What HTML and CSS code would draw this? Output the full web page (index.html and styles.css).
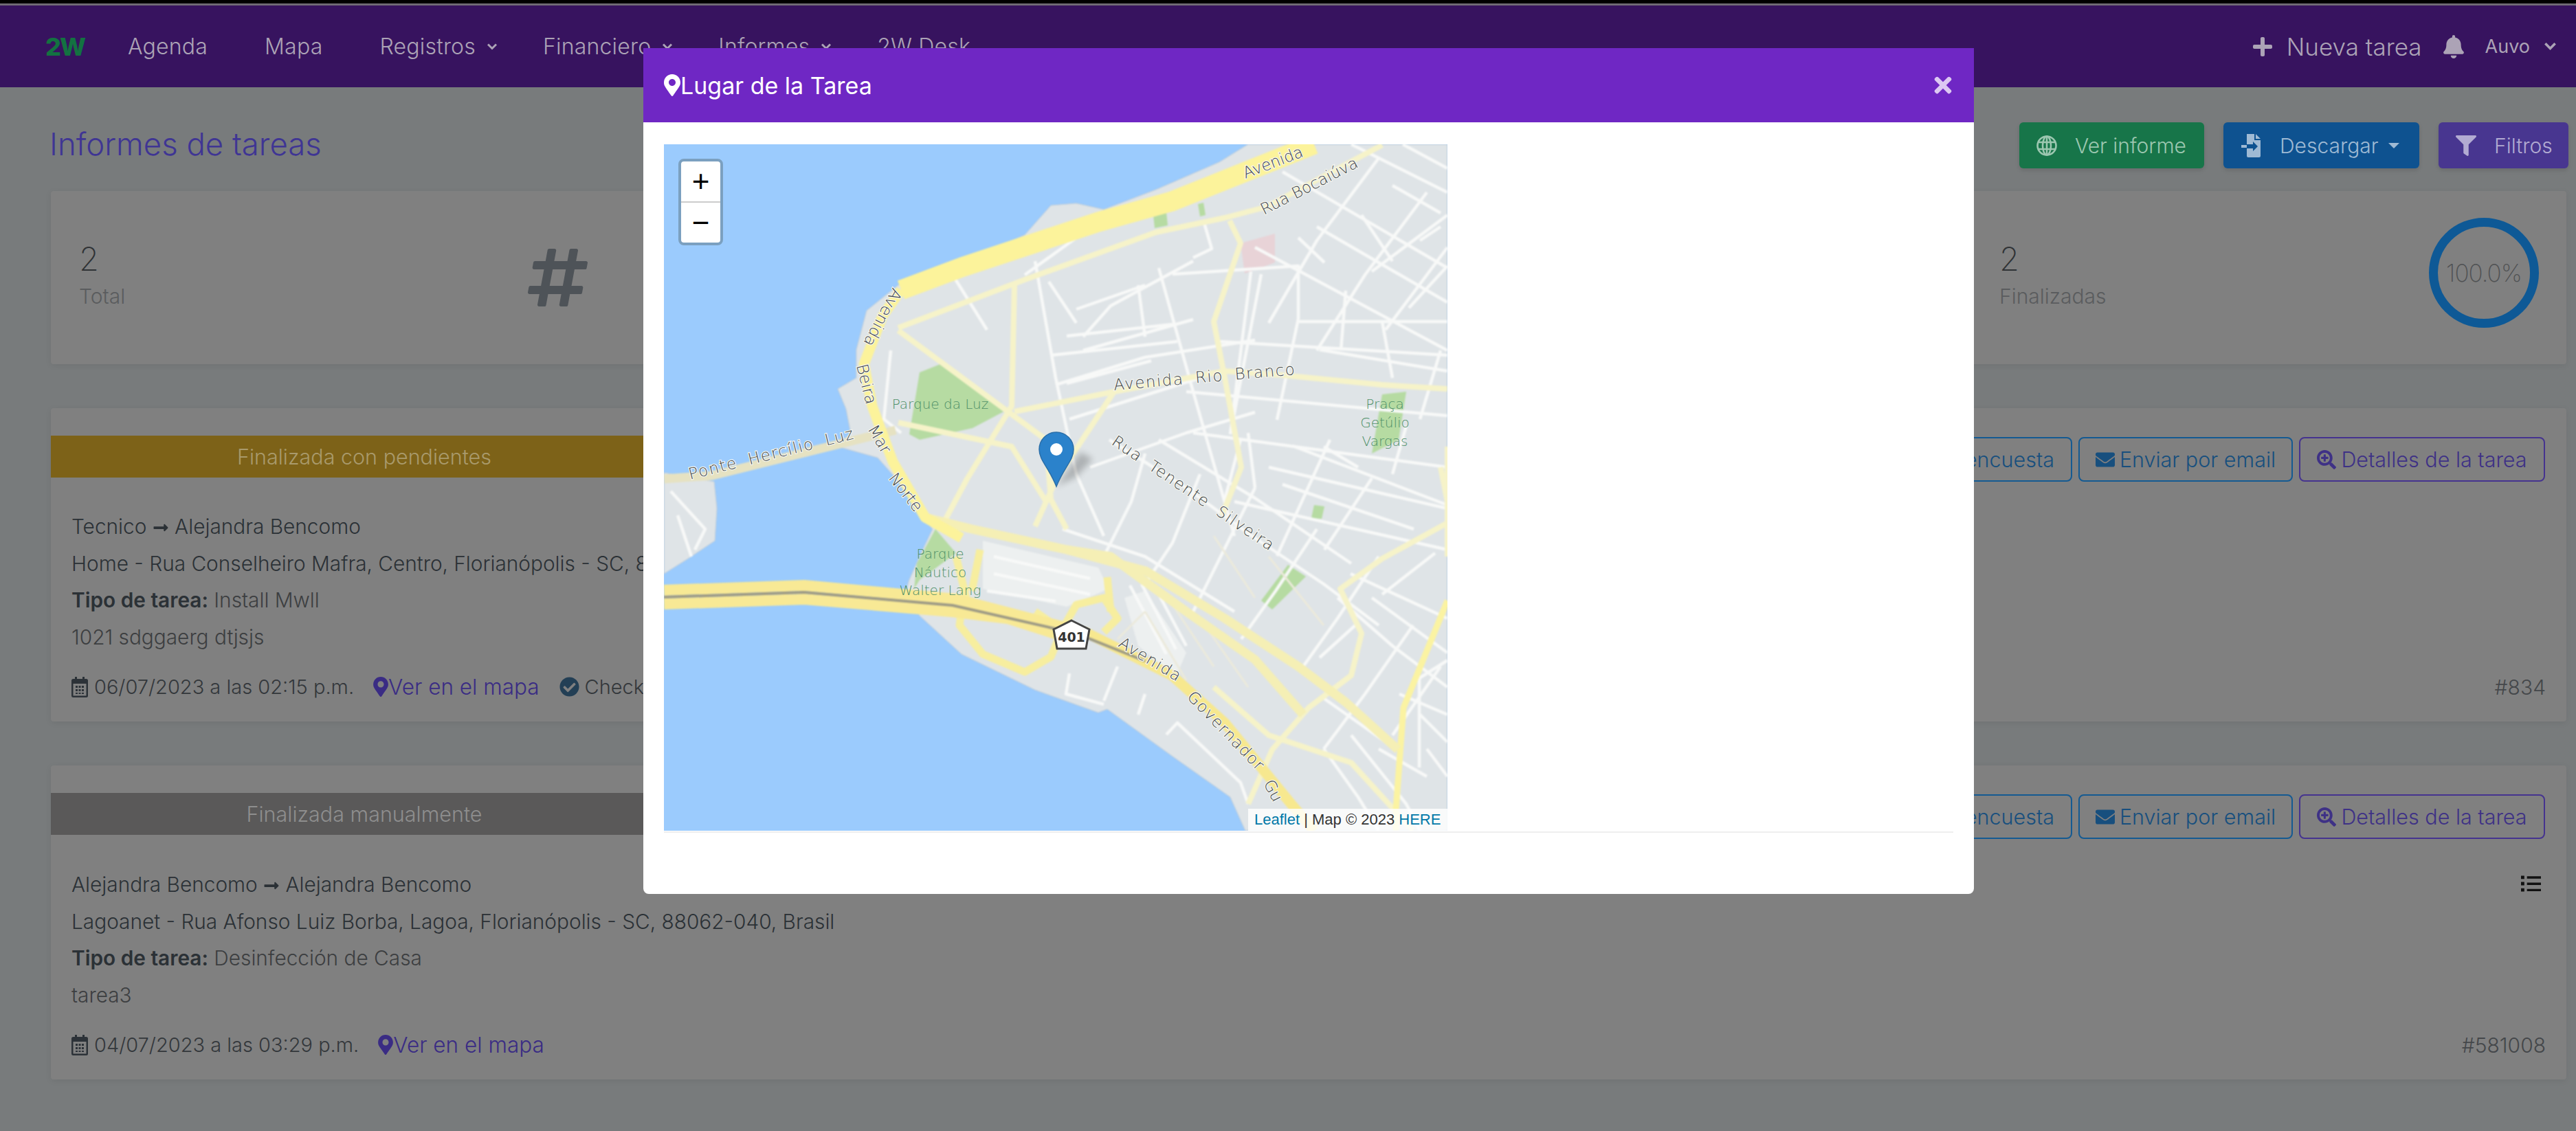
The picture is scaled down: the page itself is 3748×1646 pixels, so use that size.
FILE: index.html
```html
<!DOCTYPE html>
<html lang="es">
<head>
<meta charset="utf-8">
<title>Informes de tareas</title>
<link rel="stylesheet" href="styles.css">
</head>
<body>
<svg class="defs" width="0" height="0" aria-hidden="true">
  <symbol id="i-pin" viewBox="0 0 384 512"><path d="M172.268 501.67C26.97 291.031 0 268.413 0 192 0 85.961 85.961 0 192 0s192 85.961 192 192c0 76.413-26.97 99.031-172.268 309.67-9.535 13.774-29.93 13.773-39.464 0zM192 272c44.183 0 80-35.817 80-80s-35.817-80-80-80-80 35.817-80 80 35.817 80 80 80z"/></symbol>
  <symbol id="i-check" viewBox="0 0 512 512"><path d="M504 256c0 136.967-111.033 248-248 248S8 392.967 8 256 119.033 8 256 8s248 111.033 248 248zM227.314 387.314l184-184c6.248-6.248 6.248-16.379 0-22.627l-22.627-22.627c-6.248-6.249-16.379-6.249-22.628 0L216 308.118l-70.059-70.059c-6.248-6.248-16.379-6.248-22.628 0l-22.627 22.627c-6.248 6.248-6.248 16.379 0 22.627l104 104c6.249 6.249 16.379 6.249 22.628.001z"/></symbol>
  <symbol id="i-mail" viewBox="0 0 512 512"><path d="M502.3 190.8c3.9-3.1 9.7-.2 9.7 4.7V400c0 26.5-21.5 48-48 48H48c-26.5 0-48-21.5-48-48V195.6c0-5 5.7-7.8 9.7-4.7 22.4 17.4 52.1 39.5 154.1 113.6 21.1 15.4 56.7 47.8 92.2 47.6 35.7.3 72-32.8 92.3-47.6 102-74.1 131.6-96.3 154-113.7zM256 320c23.2.4 56.6-29.2 73.4-41.4 132.7-96.3 142.8-104.7 173.4-128.7 5.8-4.5 9.2-11.5 9.2-18.9v-19c0-26.5-21.5-48-48-48H48C21.5 64 0 85.5 0 112v19c0 7.4 3.4 14.3 9.2 18.9 30.6 23.9 40.7 32.4 173.4 128.7 16.8 12.2 50.2 41.8 73.4 41.4z"/></symbol>
  <symbol id="i-zoom" viewBox="0 0 512 512"><path d="M304 192v32c0 6.6-5.4 12-12 12h-56v56c0 6.6-5.4 12-12 12h-32c-6.6 0-12-5.4-12-12v-56h-56c-6.6 0-12-5.4-12-12v-32c0-6.6 5.4-12 12-12h56v-56c0-6.6 5.4-12 12-12h32c6.6 0 12 5.4 12 12v56h56c6.6 0 12 5.4 12 12zm201 284.7L476.7 505c-9.4 9.4-24.6 9.4-33.9 0L343 405.3c-4.5-4.5-7-10.6-7-17V372c-35.3 27.6-79.7 44-128 44C93.1 416 0 322.9 0 208S93.1 0 208 0s208 93.1 208 208c0 48.3-16.4 92.7-44 128h16.3c6.4 0 12.5 2.5 17 7l99.7 99.7c9.3 9.4 9.3 24.6 0 34zM344 208c0-75.2-60.8-136-136-136S72 132.8 72 208s60.8 136 136 136 136-60.8 136-136z"/></symbol>
  <symbol id="i-plus" viewBox="0 0 448 512"><path d="M416 208H272V64c0-17.67-14.33-32-32-32h-32c-17.67 0-32 14.33-32 32v144H32c-17.67 0-32 14.33-32 32v32c0 17.67 14.33 32 32 32h144v144c0 17.67 14.33 32 32 32h32c17.67 0 32-14.33 32-32V304h144c17.67 0 32-14.33 32-32v-32c0-17.67-14.33-32-32-32z"/></symbol>
  <symbol id="i-bell" viewBox="0 0 448 512"><path d="M224 512c35.32 0 63.97-28.65 63.97-64H160.03c0 35.35 28.65 64 63.97 64zm215.39-149.71c-19.32-20.76-55.47-51.99-55.47-154.29 0-77.7-54.48-139.9-127.94-155.16V32c0-17.67-14.32-32-31.98-32s-31.98 14.33-31.98 32v20.84C118.56 68.1 64.08 130.3 64.08 208c0 102.3-36.15 133.53-55.47 154.29-6 6.45-8.66 14.16-8.61 21.71.11 16.4 12.98 32 32.1 32h383.8c19.12 0 32-15.6 32.1-32 .05-7.55-2.61-15.27-8.61-21.71z"/></symbol>
  <symbol id="i-filter" viewBox="0 0 512 512"><path d="M487.976 0H24.028C2.71 0-8.047 25.866 7.058 40.971L192 225.941V432c0 7.831 3.821 15.17 10.237 19.662l80 55.98C298.02 518.69 320 507.493 320 487.98V225.941l184.947-184.97C520.021 25.896 509.338 0 487.976 0z"/></symbol>
  <symbol id="i-arrow" viewBox="0 0 448 512"><path d="M313.941 216H12c-6.627 0-12 5.373-12 12v56c0 6.627 5.373 12 12 12h301.941v46.059c0 21.382 25.851 32.09 40.971 16.971l86.059-86.059c9.373-9.373 9.373-24.569 0-33.941l-86.059-86.059c-15.119-15.119-40.971-4.411-40.971 16.971V216z"/></symbol>
  <symbol id="i-times" viewBox="0 0 352 512"><path d="M242.72 256l100.07-100.07c12.28-12.28 12.28-32.19 0-44.48l-22.24-22.24c-12.28-12.28-32.19-12.28-44.48 0L176 189.28 75.93 89.21c-12.28-12.28-32.19-12.28-44.48 0L9.21 111.45c-12.28 12.28-12.28 32.19 0 44.48L109.28 256 9.21 356.07c-12.28 12.28-12.28 32.19 0 44.48l22.24 22.24c12.28 12.28 32.2 12.28 44.48 0L176 322.72l100.07 100.07c12.28 12.28 32.2 12.28 44.48 0l22.24-22.24c12.28-12.28 12.28-32.19 0-44.48L242.72 256z"/></symbol>
  <symbol id="i-hash" viewBox="0 0 448 512" preserveAspectRatio="none"><path d="M440.667 182.109l7.143-40c1.313-7.355-4.342-14.109-11.813-14.109h-74.81l14.623-81.891C377.123 38.754 371.468 32 363.997 32h-40.632a12 12 0 0 0-11.813 9.891L296.175 128H197.54l14.623-81.891C213.477 38.754 207.822 32 200.35 32h-40.632a12 12 0 0 0-11.813 9.891L132.528 128H53.432a12 12 0 0 0-11.813 9.891l-7.143 40C33.163 185.246 38.818 192 46.289 192h74.81L98.242 320H19.146a12 12 0 0 0-11.813 9.891l-7.143 40C-1.123 377.246 4.532 384 12.003 384h74.81L72.19 465.891C70.877 473.246 76.532 480 84.003 480h40.632a12 12 0 0 0 11.813-9.891L151.826 384h98.634l-14.623 81.891C234.523 473.246 240.178 480 247.65 480h40.632a12 12 0 0 0 11.813-9.891L315.472 384h79.096a12 12 0 0 0 11.813-9.891l7.143-40c1.313-7.355-4.342-14.109-11.813-14.109h-74.81l22.857-128h79.096a12 12 0 0 0 11.813-9.891zM261.889 320h-98.634l22.857-128h98.634l-22.857 128z"/></symbol>
  <symbol id="i-cal" viewBox="0 0 24 30"><path fill-rule="evenodd" d="M5 0h3v3h8V0h3v3h2.500A2.500 2.500 0 0 1 24 5.500v22a2.500 2.500 0 0 1-2.500 2.500h-19A2.500 2.500 0 0 1 0 27.500v-22A2.500 2.500 0 0 1 2.500 3H5zM2.500 10v17.500h19V10zM6 13h3v3H6zm4.500 0h3v3h-3zm4.500 0h3v3h-3zM6 18h3v3H6zm4.500 0h3v3h-3zm4.500 0h3v3h-3zM6 23h3v2H6zm4.500 0h3v2h-3zm4.500 0h3v2h-3z"/></symbol>
  <symbol id="i-chev" viewBox="0 0 16 10"><path d="M2 1.500l6 6 6-6" fill="none" stroke="currentColor" stroke-width="3"/></symbol>
  <symbol id="i-globe" viewBox="0 0 30 30"><g fill="none" stroke="currentColor" stroke-width="2.600"><circle cx="15" cy="15" r="13.500"/><ellipse cx="15" cy="15" rx="6" ry="13.500"/><path d="M2 10h26M2 20h26M15 1v28"/></g></symbol>
  <symbol id="i-file" viewBox="0 0 30 34"><path d="M8 0h11v9h9v23a2 2 0 0 1-2 2H10a2 2 0 0 1-2-2V21h9v4l7-7-7-7v4H8z"/><path d="M21 0l7 7h-7zM0 16h8v4H0z"/></symbol>
  <symbol id="i-list" viewBox="0 0 30 24"><path d="M0 0h5v5H0zM0 9.500h5v5H0zM0 19h5v5H0zM9 1h21v3.500H9zM9 10.500h21V14H9zM9 20h21v3.500H9z"/></symbol>
</svg>

<div class="strip"></div>
<header class="nav">
  <span class="logo">2W</span>
  <nav class="nav-left">
    <a class="nav-link nav-plain">Agenda</a>
    <a class="nav-link nav-plain">Mapa</a>
    <a class="nav-link">Registros <svg class="chev"><use href="#i-chev"/></svg></a>
    <a class="nav-link">Financiero <svg class="chev"><use href="#i-chev"/></svg></a>
    <a class="nav-link">Informes <svg class="chev"><use href="#i-chev"/></svg></a>
    <a class="nav-link">2W Desk</a>
  </nav>
  <div class="nav-right">
    <svg class="nav-plus"><use href="#i-plus"/></svg>
    <span class="nav-new">Nueva tarea</span>
    <svg class="nav-bell"><use href="#i-bell"/></svg>
    <span class="nav-user">Auvo</span>
    <svg class="chev user-chev"><use href="#i-chev"/></svg>
  </div>
</header>

<main class="page">
  <div class="page-head">
    <h1 class="title">Informes de tareas</h1>
    <div class="head-actions">
      <a class="solid solid-green"><svg class="solid-icon"><use href="#i-globe"/></svg>Ver informe</a>
      <a class="solid solid-blue"><svg class="solid-icon"><use href="#i-file"/></svg>Descargar<i class="caret"></i></a>
      <a class="solid solid-purple"><svg class="solid-icon"><use href="#i-filter"/></svg>Filtros</a>
    </div>
  </div>

  <section class="card summary">
    <div class="stat-left">
      <div class="stat"><div class="stat-num">2</div><div class="stat-label">Total</div></div>
      <svg class="hash"><use href="#i-hash"/></svg>
    </div>
    <div class="stat-right">
      <div class="stat"><div class="stat-num">2</div><div class="stat-label">Finalizadas</div></div>
      <div class="ring">100.0%</div>
    </div>
  </section>

  <article class="card task">
    <div class="task-top">
      <div class="band band-yellow">Finalizada con pendientes</div>
      <div class="task-actions">
        <a class="outline outline-blue outline-survey">Ver encuesta</a>
        <a class="outline outline-blue"><svg class="out-icon"><use href="#i-mail"/></svg>Enviar por email</a>
        <a class="outline outline-purple"><svg class="out-icon"><use href="#i-zoom"/></svg>Detalles de la tarea</a>
      </div>
    </div>
    <div class="task-body">
      <p class="row">Tecnico <svg class="arrow"><use href="#i-arrow"/></svg> Alejandra Bencomo</p>
      <p class="row">Home - Rua Conselheiro Mafra, Centro, Florianópolis - SC, 88010-060, Brasil</p>
      <p class="row"><b class="strong">Tipo de tarea:</b> <span class="row-thin">Install Mwll</span></p>
      <p class="row row-light">1021 sdggaerg dtjsjs</p>
    </div>
    <div class="task-foot">
      <svg class="foot-cal"><use href="#i-cal"/></svg><span class="foot-date">06/07/2023 a las 02:15 p.m.</span>
      <a class="foot-map"><svg class="foot-pin"><use href="#i-pin"/></svg>Ver en el mapa</a>
      <svg class="foot-check"><use href="#i-check"/></svg><span class="foot-date">Check-in realizado</span>
      <span class="task-id">#834</span>
    </div>
  </article>

  <article class="card task task-second">
    <div class="task-top">
      <div class="band band-gray">Finalizada manualmente</div>
      <div class="task-actions">
        <a class="outline outline-blue outline-survey">Ver encuesta</a>
        <a class="outline outline-blue"><svg class="out-icon"><use href="#i-mail"/></svg>Enviar por email</a>
        <a class="outline outline-purple"><svg class="out-icon"><use href="#i-zoom"/></svg>Detalles de la tarea</a>
      </div>
    </div>
    <svg class="task-list"><use href="#i-list"/></svg>
    <div class="task-body">
      <p class="row">Alejandra Bencomo <svg class="arrow"><use href="#i-arrow"/></svg> Alejandra Bencomo</p>
      <p class="row">Lagoanet - Rua Afonso Luiz Borba, Lagoa, Florianópolis - SC, 88062-040, Brasil</p>
      <p class="row"><b class="strong">Tipo de tarea:</b> <span class="row-thin">Desinfección de Casa</span></p>
      <p class="row row-light">tarea3</p>
    </div>
    <div class="task-foot">
      <svg class="foot-cal"><use href="#i-cal"/></svg><span class="foot-date">04/07/2023 a las 03:29 p.m.</span>
      <a class="foot-map"><svg class="foot-pin"><use href="#i-pin"/></svg>Ver en el mapa</a>
      <span class="task-id">#581008</span>
    </div>
  </article>
</main>

<div class="overlay">
  <div class="modal">
    <div class="modal-head">
      <svg class="modal-pin"><use href="#i-pin"/></svg>
      <span class="modal-title">Lugar de la Tarea</span>
      <svg class="modal-close"><use href="#i-times"/></svg>
    </div>
    <div class="modal-body">
      <div class="map">
        <svg class="map-art" viewBox="0 0 1140 999" preserveAspectRatio="none">
          <rect width="1140" height="999" fill="#9bcbfd"/>
          <g class="art">
            <path class="land" d="M850 0L808 26 716 66 640 95 600 86 563 89 525 132 433 173 341 205 295 242 280 299 280 340 253 356 265 385 272 421 250 439 311 456 357 508 380 547 391 560 372 600 357 634 352 650 372 686 433 742 540 794 632 827 645 822 739 890 824 950 846 999H1140V0Z"/>
            <path class="land" d="M0 478L73 491 77 530 74 577 35 603 0 625Z"/>
            <path class="park" d="M357 422L372 332 402 320 502 385 449 413 372 430Z"/>
            <path class="park" d="M1045 364L1080 360 1069 430 1030 450Z"/>
            <path class="park" d="M908 612L934 629 885 677 869 664Z"/>
            <path class="park" d="M946 525L961 527 957 545 942 544Z"/>
            <path class="park" d="M395 560L425 595 372 634 364 647 368 610Z"/>
            <path class="park" d="M712 103L731 99 733 118 714 122ZM777 87L785 85 788 103 780 105Z"/>
            <path class="pink" d="M839 144L889 130 889 172 845 188Z"/>
            <path class="lot" d="M464 577L632 616 647 647 586 673 464 647Z"/>
            <path class="lot" d="M670 660L700 650 760 740 745 775 690 730Z"/>

            <g class="streets">
              <path d="M1000 0L1140 70M1075 0L1140 35M900 40L1140 180M950 120L1140 230M860 150L1140 300"/>
              <path d="M1040 20L950 140 880 260M1110 70L1020 190 950 300M1140 150L1050 270M1140 103L1030 185M1140 177L1084 238"/>
              <path d="M923 136L961 172M785 111L797 152 770 165M1015 103L1060 170"/>
              <path d="M740 189L923 177 923 254M854 185L824 422M869 189L824 422M923 254L892 401M992 213L985 300M1045 258L1060 340"/>
              <path d="M923 258L1140 258M808 287L1140 307M954 299L1140 330M586 279L740 262M563 307L747 287M586 348L709 315"/>
              <path d="M540 170L570 340 600 480 640 570M690 205L700 280M720 180L770 360 790 430 830 570"/>
              <path d="M610 300L770 255M570 350L700 310 860 285M590 400L780 340M620 470L760 420 860 390"/>
              <path d="M760 360L1140 395M770 420L1140 470M880 470L1140 530M830 520L1140 590"/>
              <path d="M648 430L760 500 854 569 960 640 1040 700M720 430L860 515 1000 610M580 560L700 600 830 680"/>
              <path d="M839 430L816 517M900 495L1091 560M969 430L892 599M1030 486L961 590M915 439L1140 525M999 625L1140 690M1122 595L1045 655M1007 699L954 747"/>
              <path d="M700 450L680 520 640 600M780 480L740 580 700 640M860 500L810 600 770 680M950 560L890 650 840 720M1040 600L980 690 930 760"/>
              <path d="M980 660L1060 730 1140 790M1030 660L1140 740M1090 700L1020 800 960 880M1130 760L1060 860"/>
              <path d="M961 807L1060 877M1140 751L1099 777 1099 907M1000 860L1080 960 1100 999M1100 830L1140 870M960 880L1010 950 1040 999"/>
              <path d="M1070 800L1140 830M1110 880L1140 920M1040 880L1110 920"/>
              <path d="M590 770L585 800 640 815M731 859L747 842 839 929 850 960M660 760L640 810M700 800L690 830"/>
              <path d="M10 505L60 560 45 590M20 540L40 600"/>
              <path d="M420 190L470 270M330 300L320 400 345 420M650 100L525 190M700 205L600 240M560 200L600 260"/>
              <path d="M850 420L860 500M960 440L1010 470M770 170L650 235 610 280"/>
              <path d="M678 642L731 742M695 640L745 735M712 640L760 730M480 600L620 632M480 625L620 655M470 650L570 665"/>
              <path d="M1100 140L1130 120M1060 60L1130 100M1130 300L1100 400M1080 410L1060 480"/>
            </g>
            <g class="minor">
              <path d="M800 570L860 660M880 600L960 700M700 680L760 780M740 670L800 760M780 690L850 790M700 680L660 720"/>
            </g>
            <g class="road">
              <path d="M1045 1L877 91 816 107 716 128 525 197 341 267"/>
              <path d="M1140 356L1045 350 900 336 816 330 655 360 510 389"/>
              <path d="M823 111L839 144 800 258 816 340 840 470 812 540"/>
              <path d="M510 205L506 381 441 487 410 545"/>
              <path d="M341 271L556 430 563 517 586 560"/>
              <path d="M655 360L571 487 540 556"/>
              <path d="M341 405L506 440 556 520"/>
              <path d="M1140 551L1045 603 984 647 1015 712 1000 773 938 820 885 881 850 960"/>
              <path d="M1140 440V600M1130 470L1140 520"/>
              <path d="M800 790L880 860 1000 900 1090 999"/>
            </g>
            <path class="road-bright" d="M1140 664L1076 820 1065 968V999"/>
            <path class="highway-thin" d="M380 543L448 560 586 590 701 621 816 690 923 760 992 812 1068 881"/>
            <path class="highway-thin" d="M586 590L650 600 760 680 860 750 930 830"/>
            <path class="road-loop" d="M433 677L430 700 464 742 525 768 563 746 579 707 540 680M579 707L600 670 640 660 660 690 640 710"/>
            <path class="road-loop" d="M425 600L445 680M460 590L448 650M645 630L650 680"/>
            <path class="road-bridge" d="M0 487L70 482 337 416"/>
            <path class="beira-top" d="M946 0L739 83 632 113 433 179 345 212"/>
            <path class="beira" d="M345 212L318 250 291 320 303 381 333 462 380 543 433 573"/>
            <path class="gov" d="M617 712L739 773 816 842 915 963 946 999"/>
            <path class="carriage" d="M0 649L204 642 425 662 617 712"/>
            <path class="carriage" d="M0 669L204 662 418 680 500 690 610 725"/>
            <path class="carriage-line" d="M0 659L204 652 420 671 600 712 700 752"/>
          </g>
          <g class="map-labels">
            <text transform="translate(846 50) rotate(-21)">Avenida</text>
            <text transform="translate(873 103) rotate(-27)">Rua Bocaiúva</text>
            <text transform="translate(333 208) rotate(118)">Avenida</text>
            <text transform="translate(655 358) rotate(-5)" class="wide wordy">Avenida Rio Branco</text>
            <text transform="translate(38 488) rotate(-14)" class="wide wordy">Ponte Hercílio Luz</text>
            <text transform="translate(280 322) rotate(76)">Beira</text>
            <text transform="translate(296 414) rotate(60)">Mar</text>
            <text transform="translate(326 486) rotate(52)">Norte</text>
            <text transform="translate(650 436) rotate(34)" class="wide wordy">Rua Tenente Silveira</text>
            <text transform="translate(660 730) rotate(31)" class="wide">Avenida</text>
            <text transform="translate(760 805) rotate(46)" class="wide">Governador</text>
            <text transform="translate(872 930) rotate(62)">Gu</text>
          </g>
          <g class="map-parks">
            <text x="402" y="385">Parque da Luz</text>
            <text x="1049" y="385">Praça</text>
            <text x="1049" y="412">Getúlio</text>
            <text x="1049" y="439">Vargas</text>
            <text x="402" y="603">Parque</text>
            <text x="402" y="630">Náutico</text>
            <text x="402" y="656">Walter Lang</text>
          </g>
          <g>
            <path d="M593 693L619 706 614 734 572 734 567 706Z" fill="#fff" stroke="#444" stroke-width="3"/>
            <text class="shield" x="593" y="724">401</text>
          </g>
          <path class="pin-shadow" d="M571 498L606 448 624 458 600 484Z"/>
          <path d="M571 498C560 470 546 460 546 444A25 25 0 0 1 596 444C596 460 582 470 571 498Z" fill="#2b82cb" stroke="#2a6ea8" stroke-width="1.500"/>
          <ellipse cx="571" cy="444" rx="9" ry="9" fill="#fff"/>
        </svg>
        <div class="zoom">
          <span class="zoom-btn">+</span>
          <span class="zoom-btn">−</span>
        </div>
        <div class="attrib"><span class="attrib-link">Leaflet</span> | Map © 2023 <span class="attrib-link">HERE</span></div>
      </div>
      <hr class="rule">
    </div>
  </div>
</div>
</body>
</html>
```
FILE: styles.css
```css
* { box-sizing: border-box; }
html, body { margin: 0; padding: 0; }
body {
  width: 3748px;
  height: 1646px;
  overflow: hidden;
  position: relative;
  background: #787b7c;
  font-family: Inter, "Open Sans", sans-serif;
  font-weight: 300;
  color: #2c3238;
}
.defs { position: absolute; }
svg { fill: currentColor; }

.strip { height: 8px; background: linear-gradient(#000 0 5px, #6f6a74 5px); }

.nav {
  height: 119px;
  background: #37135f;
  display: flex;
  align-items: center;
  padding: 0 28px 0 66px;
  color: #aca3b6;
  font-size: 32px;
}
.logo { font-weight: 800; font-size: 36px; color: #137241; width: 120px; letter-spacing: -2px; }
.nav-left { display: flex; align-items: center; gap: 66px; }
.nav-link { display: flex; align-items: center; gap: 16px; font-weight: 300; letter-spacing: .2px; }
.nav-plain { margin-right: 17px; }
.chev { width: 16px; height: 12px; }
.nav-right { margin-left: auto; display: flex; align-items: center; }
.nav-plus { width: 28px; height: 32px; margin-right: 21px; }
.nav-new { font-size: 35px; font-weight: 300; }
.nav-bell { width: 30px; height: 34px; margin: 0 31px 0 31px; }
.nav-user { font-size: 27px; font-weight: 400; }
.user-chev { margin-left: 20px; width: 19px; height: 13px; }

.page { padding: 51px 14px 0 74px; }
.page-head { display: flex; justify-content: space-between; align-items: center; height: 67px; }
.title { margin: -3px 0 0 -2px; font-size: 45.500px; font-weight: 300; color: #3f3594; line-height: 1; }
.head-actions { display: flex; gap: 28px; margin-right: -3px; }
.solid {
  height: 67px;
  border-radius: 6px;
  display: flex;
  align-items: center;
  font-size: 30px;
  font-weight: 300;
  box-shadow: 0 3px 6px rgba(0,0,0,.12);
}
.solid-green { width: 269px; padding-left: 25px; background: #177549; color: #9cc7b0; }
.solid-blue { width: 285px; padding-left: 26px; background: #0e5290; color: #9fbad4; }
.solid-purple { width: 189px; padding-left: 25px; background: #483690; color: #b2abd2; }
.solid-icon { width: 30px; height: 34px; margin-right: 26px; flex: none; }
.caret { border: 8px solid transparent; border-top-color: currentColor; border-bottom: 0; margin-left: 14px; }

.card { background: #808080; border-radius: 4px; box-shadow: 0 2px 10px rgba(0,0,0,.07); }
.summary {
  margin-top: 33px;
  height: 252px;
  display: flex;
  justify-content: space-between;
  align-items: center;
  padding: 0 40px 0 41px;
}
.stat-left { display: flex; justify-content: space-between; align-items: center; width: 740px; }
.stat-right { display: flex; justify-content: space-between; align-items: center; width: 785px; }
.stat { margin-top: -10px; }
.stat-num { font-size: 47px; font-weight: 200; color: #2f3235; line-height: 56px; }
.stat-label { font-size: 30px; font-weight: 300; color: #5a5c5e; margin-top: 8px; line-height: 36px; }
.hash { width: 87px; height: 96px; color: #4e5358; }
.ring {
  width: 160px;
  height: 160px;
  border: 13px solid #0e5996;
  border-radius: 50%;
  display: flex;
  align-items: center;
  justify-content: center;
  font-size: 35px;
  font-weight: 200;
  color: #505254;
  letter-spacing: -1px;
  margin-top: -14px;
}

.task { margin-top: 64px; height: 456px; padding-top: 40px; position: relative; }
.task-second { margin-top: 64px; height: 457px; }
.task-top { display: flex; justify-content: space-between; align-items: flex-start; }
.band {
  width: 912px;
  height: 61px;
  display: flex;
  align-items: center;
  justify-content: center;
  font-size: 30.500px;
  font-weight: 300;
}
.band-yellow { background: #7d6218; color: #a99a6c; }
.band-gray { background: #5a5959; color: #8e8e8e; }
.task-actions { display: flex; gap: 9px; padding: 2px 31px 0 0; }
.outline {
  height: 65px;
  border: 2px solid;
  border-radius: 8px;
  display: flex;
  align-items: center;
  font-size: 30.500px;
  font-weight: 300;
  justify-content: center;
  white-space: nowrap;
}
.outline-blue { border-color: #145a92; color: #174f7e; width: 312px; }
.outline-purple { border-color: #45338f; color: #3e3186; width: 358px; }
.out-icon { width: 28px; height: 28px; margin-right: 7px; flex: none; }
.outline-survey { width: 500px; justify-content: flex-end; padding-right: 24px; }

.task-list { position: absolute; right: 37px; top: 160px; width: 29px; height: 24px; color: #111; }
.task-body { padding: 39px 30px 0; }
.task-second .task-body { padding-top: 40px; }
.row { margin: 0; font-size: 29.800px; line-height: 53.500px; font-weight: 300; color: #2b3136; white-space: nowrap; }
.row-light { font-weight: 300; color: #3c3e40; }
.row-thin { color: #3c3e40; }
.strong { font-weight: 600; }
.arrow { width: 24px; height: 24px; vertical-align: -3px; }
.task-foot { display: flex; align-items: center; padding: 26px 30px 0; font-size: 29px; white-space: nowrap; }
.foot-cal { width: 24px; height: 30px; margin-right: 9px; flex: none; color: #2c3238; }
.foot-date { font-weight: 300; color: #33373b; }
.foot-map { margin-left: 28px; display: flex; align-items: center; color: #3a2c84; font-size: 31.500px; font-weight: 300; margin-right: 29px; }
.foot-pin { width: 22px; height: 29px; }
.foot-check { width: 29px; height: 29px; margin-right: 8px; color: #233f55; }
.task-id { margin-left: auto; font-size: 30px; font-weight: 300; color: #44474a; }

.overlay { position: absolute; left: 936px; top: 70px; }
.modal { width: 1936px; height: 1231px; background: #fff; border-radius: 0 0 8px 8px; display: flex; flex-direction: column; }
.modal-head {
  height: 108px;
  background: #6f27c4;
  color: #fff;
  display: flex;
  align-items: center;
  padding: 0 31px 0 30px;
  font-size: 34px;
}
.modal-pin { width: 24px; height: 32px; }
.modal-title { font-weight: 400; }
.modal-close { margin-left: auto; width: 28px; height: 36px; color: #dcc8f2; }
.modal-body { padding: 32px 30px 0; }
.map { position: relative; width: 1140px; height: 999px; overflow: hidden; }
.map-art { width: 100%; height: 100%; display: block; }
.art { filter: blur(.8px); }
.land { fill: #dfe4e7; stroke: #c9d0d4; stroke-width: 1; }
.park { fill: #b6dba2; }
.pink { fill: #e8d3d7; }
.lot { fill: #edf0f0; }
.streets path { fill: none; stroke: #f8f9f8; stroke-width: 4.500; stroke-linejoin: round; }
.minor path { fill: none; stroke: #eceadb; stroke-width: 3; }
.road path { fill: none; stroke: #f6f3c9; stroke-width: 8; stroke-linejoin: round; }
.road-bright { fill: none; stroke: #fbf3a2; stroke-width: 9; }
.highway-thin { fill: none; stroke: #f5efb5; stroke-width: 13; stroke-linejoin: round; }
.road-loop { fill: none; stroke: #f7ee9f; stroke-width: 11; stroke-linejoin: round; }
.road-bridge { fill: none; stroke: #e6e2c2; stroke-width: 13; }
.beira-top { fill: none; stroke: #fcf39b; stroke-width: 29; stroke-linejoin: round; }
.beira { fill: none; stroke: #fcf39b; stroke-width: 15; stroke-linejoin: round; }
.gov { fill: none; stroke: #f7e88f; stroke-width: 15; stroke-linejoin: round; }
.carriage { fill: none; stroke: #f8e995; stroke-width: 16; stroke-linejoin: round; }
.carriage-line { fill: none; stroke: #9d9a85; stroke-width: 4; }
.pin-shadow { fill: #000; opacity: .22; filter: blur(5px); }
.map-labels text { font-family: "DejaVu Sans", sans-serif; font-size: 23px; fill: #42474a; stroke: #f4f4ee; stroke-width: 2.500px; paint-order: stroke; }
.map-labels .wide { letter-spacing: 1.500px; }
.map-labels .wordy { word-spacing: 8px; }
.map-parks text { font-family: "DejaVu Sans", sans-serif; font-size: 20px; fill: #4f9068; text-anchor: middle; }
.shield { font-family: "DejaVu Sans", sans-serif; font-weight: 700; font-size: 19px; text-anchor: middle; fill: #333; }
.zoom {
  position: absolute;
  left: 21px;
  top: 21px;
  width: 65px;
  height: 126px;
  border: 4px solid #7ba0c0;
  border-radius: 8px;
  background: #fff;
  display: flex;
  flex-direction: column;
  font-family: "Liberation Sans", sans-serif;
  color: #000;
}
.zoom-btn { flex: 1; display: flex; align-items: center; justify-content: center; font-size: 44px; font-weight: 400; line-height: 1; }
.zoom-btn:first-child { border-bottom: 2px solid #ccc; }
.attrib {
  position: absolute;
  right: 0;
  bottom: 0;
  width: 290px;
  height: 32px;
  background: rgba(255,255,255,.8);
  font-family: "Liberation Sans", sans-serif;
  font-size: 22px;
  line-height: 32px;
  color: #333;
  font-weight: 400;
  white-space: nowrap;
  padding-left: 9px;
}
.attrib-link { color: #0078a8; }
.rule { margin: 1px 0 0; border: 0; border-top: 2px solid #eee; width: 1876px; }
```
